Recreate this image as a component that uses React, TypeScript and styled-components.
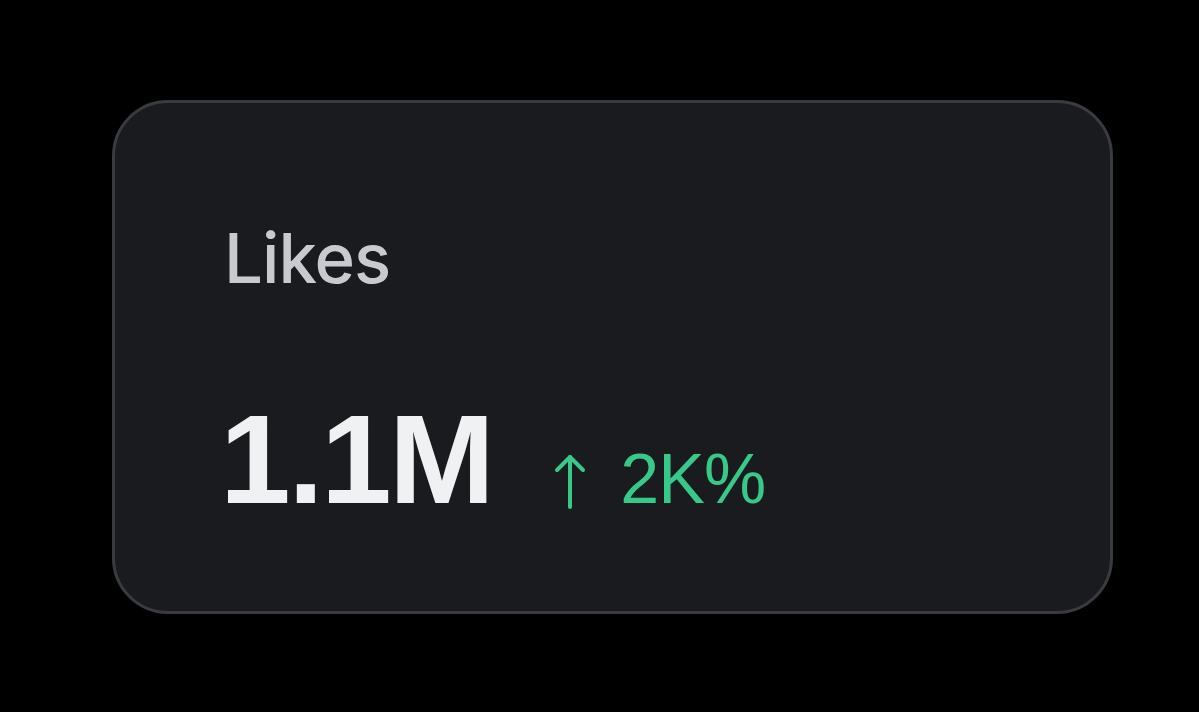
import styled, { createGlobalStyle } from "styled-components";

const GlobalStyle = createGlobalStyle`
  html, body {
    margin: 0;
    padding: 0;
    background: #000;
  }
  body {
    font-family: "Liberation Sans", Arial, sans-serif;
  }
`;

const Page = styled.div`
  width: 1199px;
  height: 712px;
  background: #000;
  padding: 100px 0 0 112px;
  box-sizing: border-box;
`;

const Card = styled.div`
  width: 1001px;
  height: 514px;
  box-sizing: border-box;
  border: 3px solid #3a3b40;
  border-radius: 56px;
  background: #1a1b1f;
  padding: 121px 0 0 109px;
  display: flex;
  flex-direction: column;
  gap: 103px;
`;

const Label = styled.div`
  font-family: Inter, "Liberation Sans", Arial, sans-serif;
  font-size: 69px;
  line-height: 1;
  font-weight: 500;
  color: #c9cacf;
  letter-spacing: -1px;
`;

const ValueRow = styled.div`
  display: flex;
  align-items: baseline;
  gap: 62px;
`;

const Value = styled.div`
  font-size: 127px;
  line-height: 1;
  font-weight: 700;
  color: #f0f1f3;
  letter-spacing: -2.5px;
  margin-left: -4px;
`;

const Change = styled.div`
  display: flex;
  align-items: baseline;
  gap: 34px;
  font-size: 70px;
  line-height: 1;
  color: #36c987;
  letter-spacing: -1px;
`;

const Arrow = styled.svg`
  width: 32px;
  height: 56px;
  align-self: flex-end;
  margin-bottom: 5px;
`;

export default function App() {
  return (
    <>
      <GlobalStyle />
      <Page>
        <Card>
          <Label>Likes</Label>
          <ValueRow>
            <Value>1.1M</Value>
            <Change>
              <Arrow viewBox="0 0 32 56" fill="none" stroke="#36c987" strokeWidth="4" strokeLinecap="round" strokeLinejoin="round">
                <path d="M16 4 V54" />
                <path d="M3 17 L16 4 L29 17" />
              </Arrow>
              <span>2K%</span>
            </Change>
          </ValueRow>
        </Card>
      </Page>
    </>
  );
}
